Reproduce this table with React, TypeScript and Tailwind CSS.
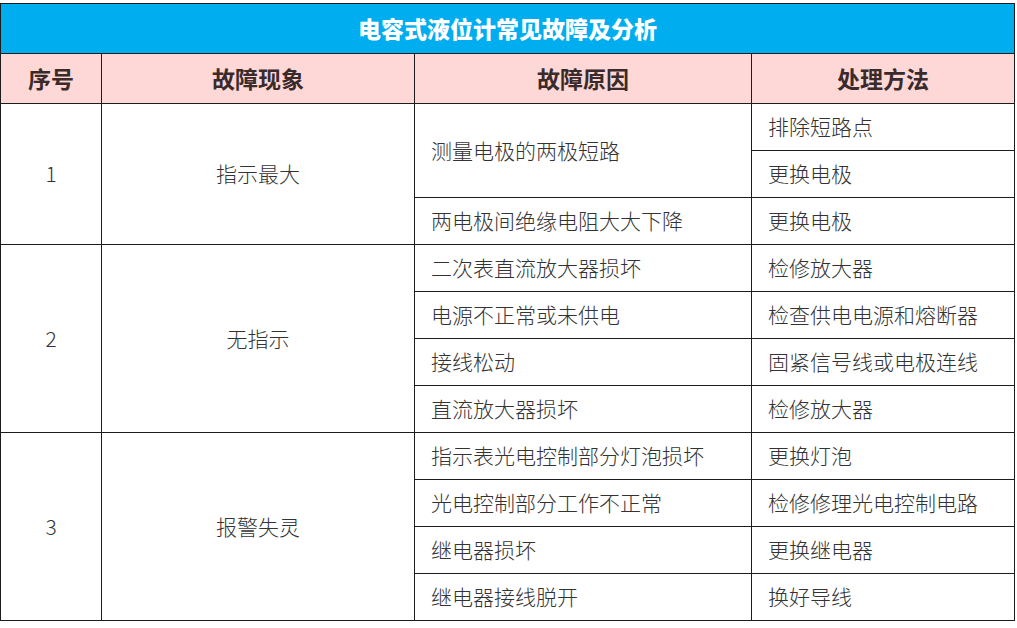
import React from 'react';

type Row = { cause: string; fixes: string[] };
type Group = { no: string; symptom: string; rows: Row[] };

const groups: Group[] = [
  {
    no: '1',
    symptom: '指示最大',
    rows: [
      { cause: '测量电极的两极短路', fixes: ['排除短路点', '更换电极'] },
      { cause: '两电极间绝缘电阻大大下降', fixes: ['更换电极'] },
    ],
  },
  {
    no: '2',
    symptom: '无指示',
    rows: [
      { cause: '二次表直流放大器损坏', fixes: ['检修放大器'] },
      { cause: '电源不正常或未供电', fixes: ['检查供电电源和熔断器'] },
      { cause: '接线松动', fixes: ['固紧信号线或电极连线'] },
      { cause: '直流放大器损坏', fixes: ['检修放大器'] },
    ],
  },
  {
    no: '3',
    symptom: '报警失灵',
    rows: [
      { cause: '指示表光电控制部分灯泡损坏', fixes: ['更换灯泡'] },
      { cause: '光电控制部分工作不正常', fixes: ['检修修理光电控制电路'] },
      { cause: '继电器损坏', fixes: ['更换继电器'] },
      { cause: '继电器接线脱开', fixes: ['换好导线'] },
    ],
  },
];

const cell = 'border border-[#1c1c1c] p-0';
const bodyText = 'text-[21px] text-[#333333] font-light';

export default function App() {
  return (
    <div className="min-h-screen bg-white pt-[3px] font-['Microsoft_YaHei','Noto_Sans_CJK_SC',sans-serif]">
      <table className="w-[1014px] table-fixed border-collapse">
        <colgroup>
          <col className="w-[101px]" />
          <col className="w-[313px]" />
          <col className="w-[337px]" />
          <col className="w-[263px]" />
        </colgroup>
        <thead>
          <tr className="h-[50px] bg-[#00aeef]">
            <th colSpan={4} className={`${cell} text-[23px] font-black text-white`}>
              电容式液位计常见故障及分析
            </th>
          </tr>
          <tr className="h-[50px] bg-[#fdd8d7] text-[23px] font-black text-[#3a2a2a]">
            <th className={cell}>序号</th>
            <th className={cell}>故障现象</th>
            <th className={cell}>故障原因</th>
            <th className={cell}>处理方法</th>
          </tr>
        </thead>
        <tbody>
          {groups.map((g) => {
            const span = g.rows.reduce((n, r) => n + r.fixes.length, 0);
            const out: React.ReactNode[] = [];
            let first = true;
            g.rows.forEach((r, ri) => {
              r.fixes.forEach((f, fi) => {
                out.push(
                  <tr key={`${g.no}-${ri}-${fi}`} className="h-[47px]">
                    {first && (
                      <>
                        <td rowSpan={span} className={`${cell} ${bodyText} text-center`}>
                          {g.no}
                        </td>
                        <td rowSpan={span} className={`${cell} ${bodyText} text-center`}>
                          {g.symptom}
                        </td>
                      </>
                    )}
                    {fi === 0 && (
                      <td rowSpan={r.fixes.length} className={`${cell} ${bodyText} pl-[16px]`}>
                        {r.cause}
                      </td>
                    )}
                    <td className={`${cell} ${bodyText} pl-[16px]`}>{f}</td>
                  </tr>
                );
                first = false;
              });
            });
            return out;
          })}
        </tbody>
      </table>
    </div>
  );
}
